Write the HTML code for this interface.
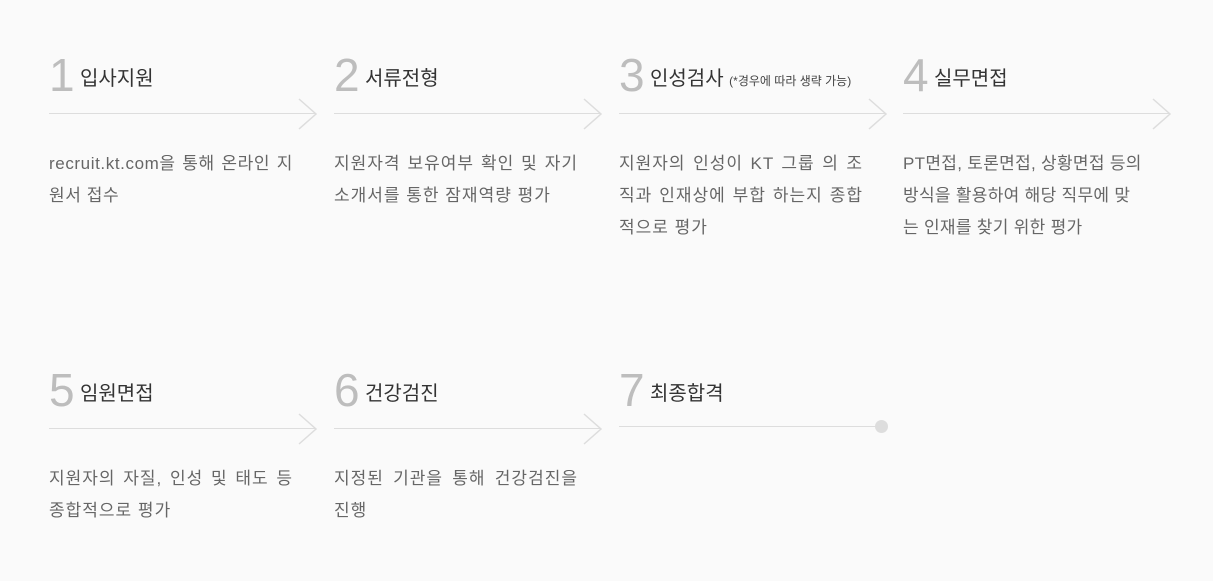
<!DOCTYPE html>
<html><head><meta charset="utf-8"><style>
body{margin:0;background:#fafafa;width:1213px;height:581px;overflow:hidden;position:relative;font-family:"Liberation Sans","Noto Sans CJK KR",sans-serif}
.s{position:absolute;width:268px}
.n{position:absolute;left:0;top:0;font-size:46px;color:#bdbdbd;line-height:46px;font-weight:300}
.t{position:absolute;left:31px;top:10px;font-size:20px;color:#333;white-space:nowrap}
.t small{font-size:12px;color:#444}
.l{position:absolute;left:0;top:61px;width:266px;height:1px;background:#ddd}
.a{position:absolute;left:248px;top:46px}
.d{position:absolute;left:0;top:96px;width:244px;font-size:17px;line-height:32px;color:#666;text-align:justify;text-align-last:left;word-break:break-all;letter-spacing:1px}
.dot{position:absolute;left:256px;width:13px;height:13px;border-radius:50%;background:#ddd}
</style></head><body>
<div class="s" style="left:49px;top:52px"><div class="n">1</div><div class="t">입사지원</div><div class="l"></div><svg class="a" width="22" height="32"><path d="M2 1 L19 16 L2 31" fill="none" stroke="#ddd" stroke-width="1.5"/></svg><div class="d" style="letter-spacing:0.6px">recruit.kt.com을 통해 온라인 지원서 접수</div></div>
<div class="s" style="left:334px;top:52px"><div class="n">2</div><div class="t">서류전형</div><div class="l"></div><svg class="a" width="22" height="32"><path d="M2 1 L19 16 L2 31" fill="none" stroke="#ddd" stroke-width="1.5"/></svg><div class="d">지원자격 보유여부 확인 및 자기소개서를 통한 잠재역량 평가</div></div>
<div class="s" style="left:619px;top:52px"><div class="n">3</div><div class="t">인성검사 <small>(*경우에 따라 생략 가능)</small></div><div class="l"></div><svg class="a" width="22" height="32"><path d="M2 1 L19 16 L2 31" fill="none" stroke="#ddd" stroke-width="1.5"/></svg><div class="d">지원자의 인성이 KT 그룹 의 조직과 인재상에 부합 하는지 종합적으로 평가</div></div>
<div class="s" style="left:903px;top:52px"><div class="n">4</div><div class="t">실무면접</div><div class="l"></div><svg class="a" width="22" height="32"><path d="M2 1 L19 16 L2 31" fill="none" stroke="#ddd" stroke-width="1.5"/></svg><div class="d" style="letter-spacing:0.3px;text-align:left">PT면접, 토론면접, 상황면접 등의<br>방식을 활용하여 해당 직무에 맞<br>는 인재를 찾기 위한 평가</div></div>
<div class="s" style="left:49px;top:367px"><div class="n">5</div><div class="t">임원면접</div><div class="l"></div><svg class="a" width="22" height="32"><path d="M2 1 L19 16 L2 31" fill="none" stroke="#ddd" stroke-width="1.5"/></svg><div class="d">지원자의 자질, 인성 및 태도 등 종합적으로 평가</div></div>
<div class="s" style="left:334px;top:367px"><div class="n">6</div><div class="t">건강검진</div><div class="l"></div><svg class="a" width="22" height="32"><path d="M2 1 L19 16 L2 31" fill="none" stroke="#ddd" stroke-width="1.5"/></svg><div class="d">지정된 기관을 통해 건강검진을 진행</div></div>
<div class="s" style="left:619px;top:367px"><div class="n">7</div><div class="t">최종합격</div><div class="l" style="top:59px;width:260px"></div><div class="dot" style="top:53px"></div></div>
</body></html>
